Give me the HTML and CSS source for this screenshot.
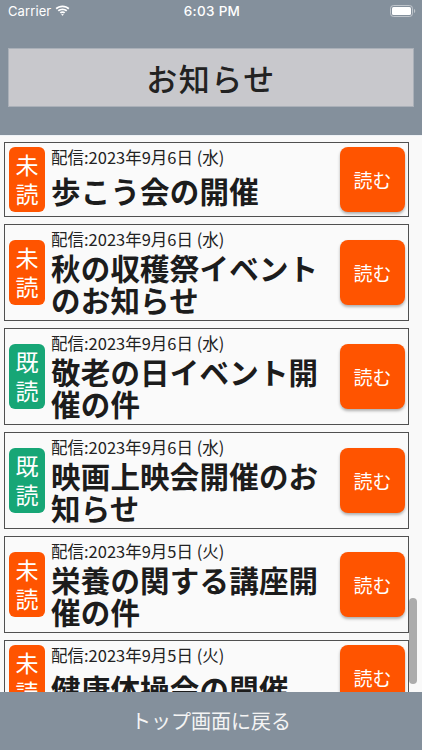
FILE: index.html
```html
<!DOCTYPE html>
<html lang="ja">
<head>
<meta charset="utf-8">
<title>お知らせ</title>
<link rel="stylesheet" href="styles.css">
</head>
<body>
<div class="screen">
  <header class="top">
    <div class="status">
      <div class="status-left">
        <span class="carrier">Carrier</span>
        <svg class="wifi" width="15" height="11" viewBox="0 0 15 11">
          <path d="M7.5 2.2c2.2 0 4.2.8 5.7 2.2l1.2-1.3C12.6 1.4 10.2.4 7.5.4S2.4 1.4.6 3.1l1.2 1.3c1.5-1.4 3.5-2.2 5.7-2.2z" fill="#fff"/>
          <path d="M7.5 5.2c1.4 0 2.6.5 3.6 1.3l1.2-1.3C11 4.1 9.3 3.4 7.5 3.4S4 4.1 2.7 5.2l1.2 1.3c1-.8 2.2-1.3 3.6-1.3z" fill="#fff"/>
          <path d="M7.5 8.1c.6 0 1.1.2 1.5.5l1.3-1.3c-.8-.7-1.700-1-2.8-1s-2 .3-2.8 1L6 8.6c.4-.3.9-.5 1.5-.5zM7.5 10.8 8.9 9.4c-.4-.3-.9-.5-1.4-.5s-1 .2-1.4.5z" fill="#fff"/>
        </svg>
      </div>
      <span class="time">6:03 PM</span>
      <div class="status-right">
        <svg class="battery" width="26" height="12" viewBox="0 0 26 12">
          <rect x="0.5" y="0.5" width="22" height="11" rx="3" fill="none" stroke="#d8dce0" stroke-opacity="0.7"/>
          <rect x="2" y="2" width="19" height="8" rx="1.5" fill="#fff"/>
          <path d="M24 4v4c.7-.2 1.2-1 1.2-2S24.7 4.2 24 4z" fill="#d8dce0" fill-opacity="0.7"/>
        </svg>
      </div>
    </div>
    <div class="title-box">お知らせ</div>
  </header>

  <main class="list">
    <div class="card">
      <div class="badge unread">未<br>読</div>
      <div class="text">
        <div class="date">配信:2023年9月6日 (水)</div>
        <div class="title"><span>歩こう会の開催</span></div>
      </div>
      <button class="read">読む</button>
    </div>
    <div class="card">
      <div class="badge unread">未<br>読</div>
      <div class="text">
        <div class="date">配信:2023年9月6日 (水)</div>
        <div class="title"><span>秋の収穫祭イベントのお知らせ</span></div>
      </div>
      <button class="read">読む</button>
    </div>
    <div class="card">
      <div class="badge done">既<br>読</div>
      <div class="text">
        <div class="date">配信:2023年9月6日 (水)</div>
        <div class="title"><span>敬老の日イベント開催の件</span></div>
      </div>
      <button class="read">読む</button>
    </div>
    <div class="card">
      <div class="badge done">既<br>読</div>
      <div class="text">
        <div class="date">配信:2023年9月6日 (水)</div>
        <div class="title"><span>映画上映会開催のお知らせ</span></div>
      </div>
      <button class="read">読む</button>
    </div>
    <div class="card">
      <div class="badge unread">未<br>読</div>
      <div class="text">
        <div class="date">配信:2023年9月5日 (火)</div>
        <div class="title"><span>栄養の関する講座開催の件</span></div>
      </div>
      <button class="read">読む</button>
    </div>
    <div class="card">
      <div class="badge unread">未<br>読</div>
      <div class="text">
        <div class="date">配信:2023年9月5日 (火)</div>
        <div class="title"><span>健康体操会の開催</span></div>
      </div>
      <button class="read">読む</button>
    </div>
    <div class="scrollbar"></div>
  </main>

  <footer class="bottom">トップ画面に戻る</footer>
</div>
</body>
</html>
```

FILE: styles.css
```css
* { box-sizing: border-box; }

html, body {
  margin: 0;
  padding: 0;
}

body {
  font-family: "Noto Sans CJK JP", "Noto Sans", sans-serif;
  background: #f9f9f9;
}

.screen {
  width: 422px;
  height: 750px;
  display: flex;
  flex-direction: column;
  overflow: hidden;
}

.top {
  height: 135px;
  background: #84909c;
  display: flex;
  flex-direction: column;
  flex-shrink: 0;
}

.status {
  height: 24px;
  display: grid;
  grid-template-columns: 1fr auto 1fr;
  align-items: center;
  padding: 0 6px 2px 8px;
  color: #fff;
}

.status-left {
  display: flex;
  align-items: center;
  gap: 4px;
}

.carrier {
  font-family: "Inter", "Liberation Sans", sans-serif;
  font-size: 13px;
  letter-spacing: 0.1px;
}

.wifi { display: block; margin-top: -1px; }

.time {
  font-family: "Inter", "Liberation Sans", sans-serif;
  font-size: 13.5px;
  font-weight: 500;
  letter-spacing: 0.3px;
}

.status-right {
  display: flex;
  justify-content: flex-end;
}

.battery { display: block; }

.title-box {
  margin: 24px 8px 0 8px;
  height: 59px;
  background: #c8c8cc;
  border: 1px solid #aab0b8;
  display: flex;
  align-items: center;
  justify-content: center;
  font-size: 31px;
  font-weight: 500;
  color: #222;
  letter-spacing: 1.5px;
}

.list {
  position: relative;
  flex: 1;
  overflow: hidden;
  padding: 6px 13px 0 4px;
  background: #f9f9f9;
  border-top: 1px solid #eef2f6;
  display: flex;
  flex-direction: column;
  gap: 7px;
}

.card {
  flex-shrink: 0;
  display: flex;
  align-items: center;
  border: 1px solid #505050;
  background: #fafafa;
  padding: 4px 3px 4px 4px;
  min-height: 75px;
}

.badge {
  width: 36px;
  height: 65px;
  flex-shrink: 0;
  border-radius: 6px;
  color: #fff;
  font-size: 23px;
  line-height: 29px;
  text-align: center;
  padding-top: 3px;
}

.badge.unread { background: #ff5400; }
.badge.done { background: #17a676; }

.text {
  flex: 1;
  align-self: stretch;
  display: flex;
  flex-direction: column;
  padding-left: 6px;
  min-width: 0;
}

.date {
  font-size: 16.5px;
  line-height: 21px;
  color: #222;
  white-space: nowrap;
}

.title {
  flex: 1;
  display: flex;
  align-items: center;
  padding: 1px 6px 1px 0;
  font-size: 29.5px;
  line-height: 32px;
  font-weight: 700;
  color: #1c1c1c;
  letter-spacing: 0.2px;
}

.read {
  width: 65px;
  height: 65px;
  flex-shrink: 0;
  border: none;
  border-radius: 8px;
  background: #ff5400;
  color: #fff;
  font-family: "Noto Sans CJK JP", "Noto Sans", sans-serif;
  font-size: 19px;
  padding: 0;
  box-shadow: 0 2px 3px rgba(0, 0, 0, 0.3);
}

.scrollbar {
  position: absolute;
  left: 409px;
  top: 462px;
  width: 8px;
  height: 86px;
  border-radius: 4px;
  background: rgba(120, 120, 120, 0.6);
}

.bottom {
  height: 58px;
  flex-shrink: 0;
  background: #84909c;
  color: #f4f4f4;
  font-size: 20px;
  display: flex;
  align-items: center;
  justify-content: center;
  padding-bottom: 2px;
}
```
